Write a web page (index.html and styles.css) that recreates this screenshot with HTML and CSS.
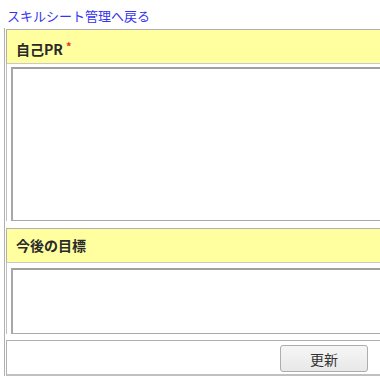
FILE: index.html
```html
<!DOCTYPE html>
<html lang="ja">
<head>
<meta charset="utf-8">
<link rel="stylesheet" href="styles.css">
</head>
<body>
<a class="back" href="#">スキルシート管理へ戻る</a>
<div class="panel">
  <div class="head">自己PR<span class="req">*</span></div>
  <div class="cell cell-pr"><textarea class="area area-pr"></textarea></div>
  <div class="head">今後の目標</div>
  <div class="cell cell-goal"><textarea class="area area-goal"></textarea></div>
  <div class="actions"><button class="btn">更新</button></div>
</div>
</body>
</html>
```
FILE: styles.css
```css
html { overflow: hidden; }
body {
  margin: 0;
  padding: 6px 0 0 4px;
  font-family: "Noto Sans CJK JP", "Noto Sans", sans-serif;
  font-size: 14px;
  color: #222;
  width: 440px;
}
.back {
  display: block;
  color: #3535f0;
  text-decoration: none;
  font-size: 13px;
  line-height: 20px;
  height: 22px;
  padding-left: 3px;
}
.panel {
  border-left: 1px solid #b0b0b0;
  padding: 1px 0 0 1px;
  display: flex;
  flex-direction: column;
}
.head {
  background: #ffff9f;
  border: 1px solid #b0b0b0;
  border-bottom-color: #c8c8c8;
  height: 33px;
  line-height: 33px;
  padding-left: 9px;
  font-weight: bold;
  color: #2a2a2a;
}
.req {
  color: #e03030;
  font-size: 11px;
  vertical-align: 4px;
  margin-left: 3px;
}
.cell {
  border-left: 1px solid #c0c0c0;
  padding: 3px 0 0 4px;
  margin-bottom: 7px;
}
.cell-pr { padding-top: 3px; margin-bottom: 7px; }
.cell-goal { padding-top: 5px; margin-bottom: 6px; }
.area {
  display: block;
  box-sizing: border-box;
  width: 420px;
  border: 1px solid #a8a8a8;
  border-top: 2px solid #a0a0a0;
  border-left: 2px solid #a8a8a8;
  background: #fff;
  resize: none;
  margin: 0;
}
.area-pr { height: 154px; }
.area-goal { height: 66px; }
.actions {
  border: 1px solid #b0b0b0;
  border-bottom: 2px solid #c0c0c0;
  height: 33px;
  box-sizing: content-box;
  display: flex;
  align-items: flex-start;
  padding: 4px 0 0 273px;
  height: 29px;
}
.btn {
  width: 88px;
  height: 27px;
  border: 1px solid #adadad;
  border-radius: 3px;
  background: linear-gradient(#f6f6f6, #e8e8e8);
  font-family: "Noto Sans CJK JP", sans-serif;
  font-size: 14px;
  color: #333;
  padding: 0;
}
```
